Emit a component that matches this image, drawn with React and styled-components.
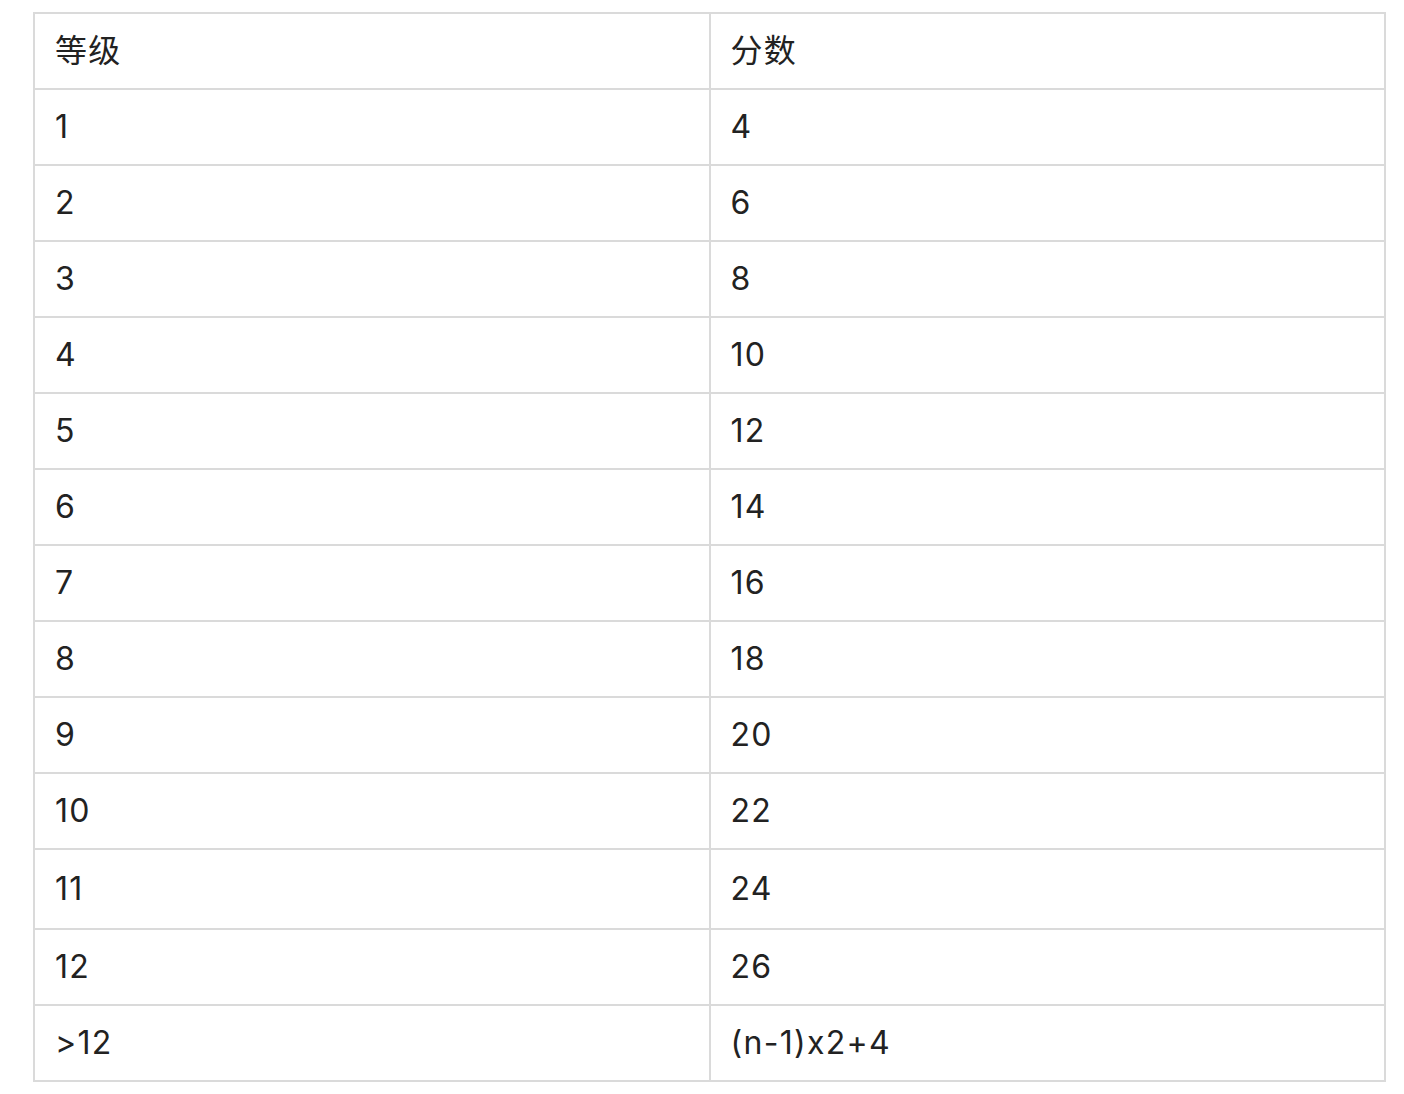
import React from "react";
import styled, { createGlobalStyle } from "styled-components";

const GlobalStyle = createGlobalStyle`
  body {
    margin: 0;
    background: #ffffff;
    font-family: Inter, "Noto Sans CJK SC", sans-serif;
    color: #222222;
  }
`;

const Page = styled.div`
  padding: 12px 18px 12px 33px;
`;

const Table = styled.table`
  width: 100%;
  border-collapse: collapse;
  table-layout: fixed;
  border: 2px solid #dadada;
`;

const Cell = styled.td`
  border: 2px solid #dadada;
  padding: ${props => (props.tall ? "22px" : "20px")} 20px;
  font-size: 32px;
  line-height: 34px;
  letter-spacing: 0.04em;
  text-align: left;
  font-weight: 400;
  color: #222222;
`;

const HeadCell = styled(Cell).attrs({ as: "th" })``;

const rows = [
  ["1", "4"],
  ["2", "6"],
  ["3", "8"],
  ["4", "10"],
  ["5", "12"],
  ["6", "14"],
  ["7", "16"],
  ["8", "18"],
  ["9", "20"],
  ["10", "22"],
  ["11", "24"],
  ["12", "26"],
  [">12", "(n-1)x2+4"]
];

export default function App() {
  return (
    <>
      <GlobalStyle />
      <Page>
        <Table>
          <thead>
            <tr>
              <HeadCell>等级</HeadCell>
              <HeadCell>分数</HeadCell>
            </tr>
          </thead>
          <tbody>
            {rows.map(([level, score]) => (
              <tr key={level}>
                <Cell tall={level === "11"}>{level}</Cell>
                <Cell tall={level === "11"}>{score}</Cell>
              </tr>
            ))}
          </tbody>
        </Table>
      </Page>
    </>
  );
}
